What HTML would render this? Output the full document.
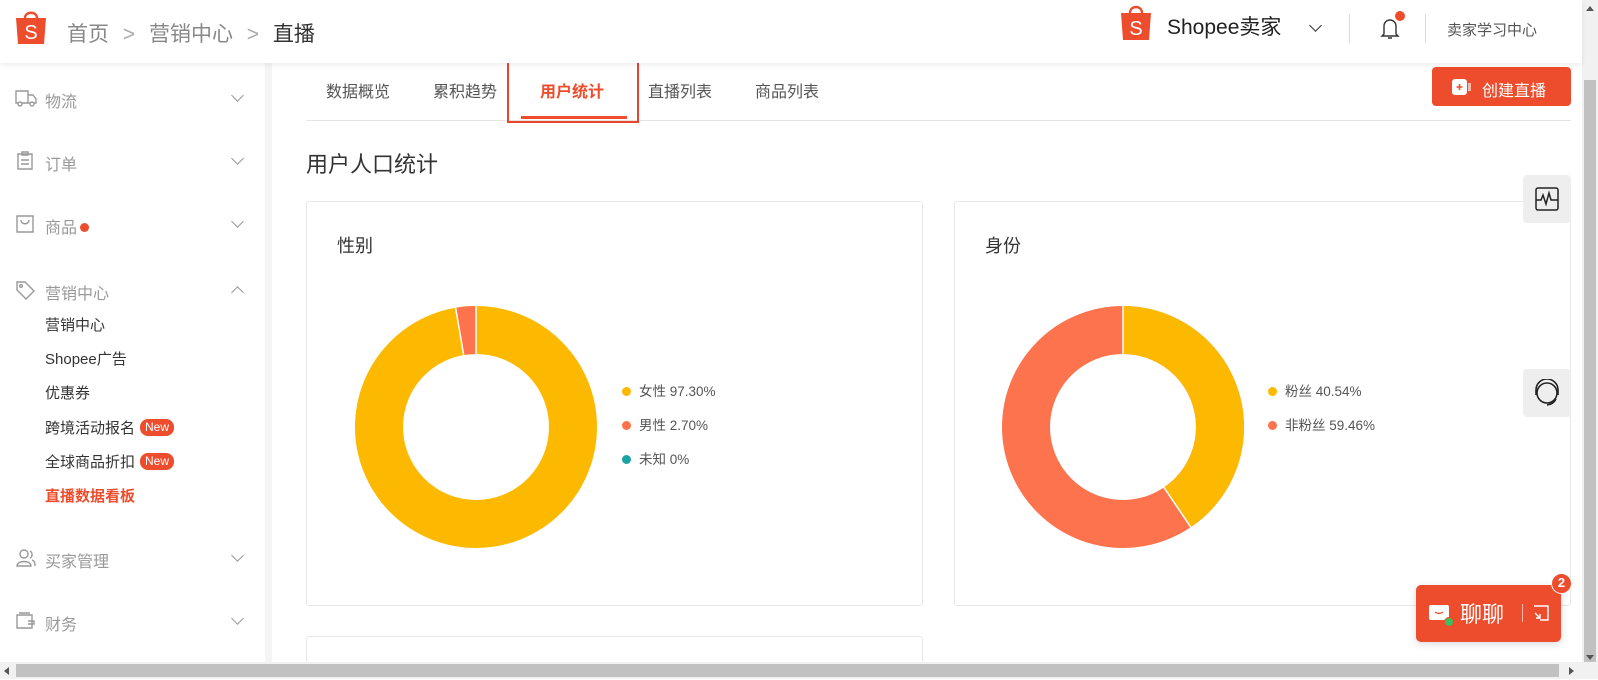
<!DOCTYPE html>
<html><head><meta charset="utf-8"><style>
*{margin:0;padding:0;box-sizing:border-box}
body{width:1598px;height:680px;overflow:hidden;background:#fff;font-family:"Liberation Sans","Noto Sans CJK SC",sans-serif;position:relative;color:#333}
.a{position:absolute;white-space:nowrap}
.hdr{left:0;top:0;width:1582px;height:63px;background:#fff;box-shadow:0 2px 6px rgba(0,0,0,.08);z-index:5}
.side{left:0;top:63px;width:265px;height:599px;background:#fff}
.gap{left:265px;top:63px;width:7px;height:599px;background:#f5f5f5}
.mi{font-size:16px;color:#999}
.sub{font-size:15px;color:#333;left:45px}
.chev{width:9px;height:9px;border-right:1.6px solid #999;border-bottom:1.6px solid #999;transform:rotate(45deg)}
.new{display:inline-block;background:#ee4d2d;color:#fff;font-size:12px;border-radius:8px;padding:0 5px;height:17px;line-height:17px;margin-left:5px;vertical-align:2px}
.tab{font-size:16px;color:#555;top:78px}
.card{border:1px solid #e8e8e8;border-radius:3px;background:#fff}
.leg{font-size:13.5px;color:#555}
.dot{display:inline-block;width:9px;height:9px;border-radius:50%;margin-right:8px;vertical-align:0}
.fl{width:48px;height:48px;background:#eee;border-radius:4px}
</style></head><body>
<div class="a hdr">
  <svg class="a" style="left:15px;top:9px" width="32" height="36" viewBox="0 0 32 36"><path d="M10 9 C10 2 22 2 22 9" fill="none" stroke="#ee4d2d" stroke-width="2.4"/><path d="M1 9 H31 L29 35 H3 Z" fill="#ee4d2d"/><text x="16" y="30" font-size="20" fill="#fff" text-anchor="middle" font-family="Liberation Sans">S</text></svg>
  <div class="a" style="left:67px;top:18px;font-size:21px;color:#888">首页 <span style="margin:0 8px;color:#aaa">&gt;</span> 营销中心 <span style="margin:0 8px;color:#aaa">&gt;</span> <span style="color:#333">直播</span></div>
  <svg class="a" style="left:1120px;top:3px" width="32" height="38" viewBox="0 0 32 38"><path d="M10 10 C10 2 22 2 22 10" fill="none" stroke="#ee4d2d" stroke-width="2.4"/><path d="M1 10 H31 L29 37 H3 Z" fill="#ee4d2d"/><text x="16" y="32" font-size="20" fill="#fff" text-anchor="middle" font-family="Liberation Sans">S</text></svg>
  <div class="a" style="left:1167px;top:11px;font-size:21px;color:#222">Shopee卖家</div>
  <div class="a chev" style="left:1311px;top:21px;border-color:#333"></div>
  <div class="a" style="left:1349px;top:14px;width:1px;height:29px;background:#ddd"></div>
  <svg class="a" style="left:1380px;top:15px" width="20" height="26" viewBox="0 0 20 26"><path d="M4 19 V11 A6 6 0 0 1 16 11 V19 L18 21 H2 Z M8 23 H12" fill="none" stroke="#333" stroke-width="1.4"/></svg>
  <div class="a" style="left:1395px;top:11px;width:10px;height:10px;border-radius:50%;background:#ee4d2d"></div>
  <div class="a" style="left:1425px;top:14px;width:1px;height:29px;background:#ddd"></div>
  <div class="a" style="left:1447px;top:19px;font-size:15px;color:#555">卖家学习中心</div>
</div>
<div class="a side"></div><div class="a gap"></div>
<svg class="a" style="left:15px;top:89px" width="22" height="18" viewBox="0 0 22 18" fill="none" stroke="#999" stroke-width="1.4"><path d="M1 2 H13 V14 H1 Z M13 6 H18 L21 10 V14 H13"/><circle cx="5" cy="15" r="2" fill="#fff"/><circle cx="17" cy="15" r="2" fill="#fff"/></svg>
<div class="a mi" style="left:45px;top:88px">物流</div><div class="a chev" style="left:233px;top:91px"></div>
<svg class="a" style="left:17px;top:151px" width="16" height="19" viewBox="0 0 16 19" fill="none" stroke="#999" stroke-width="1.4"><path d="M1 3 H15 V18 H1 Z M5 1 H11 V4 H5 Z M4 9 H12 M4 13 H12"/></svg>
<div class="a mi" style="left:45px;top:151px">订单</div><div class="a chev" style="left:233px;top:154px"></div>
<svg class="a" style="left:16px;top:215px" width="18" height="18" viewBox="0 0 18 18" fill="none" stroke="#999" stroke-width="1.4"><path d="M1 1 H17 V17 H1 Z M5 5 C5 10 13 10 13 5"/></svg>
<div class="a mi" style="left:45px;top:214px">商品<span style="display:inline-block;width:9px;height:9px;border-radius:50%;background:#ee4d2d;margin-left:3px;vertical-align:1px"></span></div><div class="a chev" style="left:233px;top:217px"></div>
<svg class="a" style="left:16px;top:281px" width="19" height="19" viewBox="0 0 19 19" fill="none" stroke="#999" stroke-width="1.4"><path d="M1 1 H9 L18 10 L10 18 L1 9 Z"/><circle cx="5" cy="5" r="1.3"/></svg>
<div class="a mi" style="left:45px;top:280px">营销中心</div><div class="a chev" style="left:233px;top:288px;transform:rotate(225deg)"></div>
<div class="a sub" style="top:314px">营销中心</div>
<div class="a sub" style="top:348px">Shopee广告</div>
<div class="a sub" style="top:382px">优惠券</div>
<div class="a sub" style="top:417px">跨境活动报名<span class="new">New</span></div>
<div class="a sub" style="top:451px">全球商品折扣<span class="new">New</span></div>
<div class="a sub" style="top:485px;color:#ee4d2d;font-weight:bold">直播数据看板</div>
<svg class="a" style="left:16px;top:549px" width="20" height="18" viewBox="0 0 20 18" fill="none" stroke="#999" stroke-width="1.4"><circle cx="8" cy="5" r="4"/><path d="M1 17 C1 11 15 11 15 17 Z M14 2 A4 4 0 0 1 14 9 M16 11 C19 12 19 15 19 17"/></svg>
<div class="a mi" style="left:45px;top:548px">买家管理</div><div class="a chev" style="left:233px;top:551px"></div>
<svg class="a" style="left:16px;top:612px" width="19" height="17" viewBox="0 0 19 17" fill="none" stroke="#999" stroke-width="1.4"><path d="M1 3 H16 V16 H1 Z M3 1 H14 M12 9 H18 V12 H12"/></svg>
<div class="a mi" style="left:45px;top:611px">财务</div><div class="a chev" style="left:233px;top:614px"></div>

<div class="a tab" style="left:326px">数据概览</div>
<div class="a tab" style="left:433px">累积趋势</div>
<div class="a tab" style="left:540px;color:#ee4d2d;font-weight:bold">用户统计</div>
<div class="a tab" style="left:648px">直播列表</div>
<div class="a tab" style="left:755px">商品列表</div>
<div class="a" style="left:306px;top:120px;width:1265px;height:1px;background:#e5e5e5"></div>
<div class="a" style="left:521px;top:116px;width:106px;height:3px;background:#ee4d2d"></div>
<div class="a" style="left:507px;top:61px;width:132px;height:62px;border:2px solid #e8452c"></div>
<div class="a" style="left:1432px;top:67px;width:139px;height:39px;background:#ee4d2d;border-radius:4px"></div>
<svg class="a" style="left:1452px;top:79px" width="20" height="16" viewBox="0 0 20 16"><rect x="0" y="0" width="15" height="16" rx="3" fill="#fff"/><rect x="16" y="4" width="3" height="8" fill="#fff" opacity=".6"/><path d="M7.5 5 V11 M4.5 8 H10.5" stroke="#ee4d2d" stroke-width="1.6"/></svg>
<div class="a" style="left:1482px;top:77px;font-size:16px;color:#fff">创建直播</div>

<div class="a" style="left:306px;top:147px;font-size:22px;color:#333">用户人口统计</div>

<div class="a card" style="left:306px;top:201px;width:617px;height:405px"></div>
<div class="a card" style="left:954px;top:201px;width:617px;height:405px"></div>
<div class="a card" style="left:306px;top:636px;width:617px;height:40px"></div>
<div class="a" style="left:337px;top:232px;font-size:18px;color:#333">性别</div>
<div class="a" style="left:985px;top:232px;font-size:18px;color:#333">身份</div>

<svg class="a" style="left:348px;top:299px" width="256" height="256" viewBox="-128 -128 256 256">
<circle r="97" fill="none" stroke="#fdb900" stroke-width="48"/>
<circle r="97" fill="none" stroke="#fd734d" stroke-width="48" stroke-dasharray="16.5 700" transform="rotate(-99.7)"/>
<path d="M0 -122 V-72" stroke="#fff" stroke-width="1.5"/>
<path d="M0 -122 V-72" stroke="#fff" stroke-width="1.5" transform="rotate(-9.7)"/>
</svg>
<div class="a leg" style="left:622px;top:380px"><span class="dot" style="background:#fdb900"></span>女性 97.30%</div>
<div class="a leg" style="left:622px;top:414px"><span class="dot" style="background:#fd734d"></span>男性 2.70%</div>
<div class="a leg" style="left:622px;top:448px"><span class="dot" style="background:#1aa3a3"></span>未知 0%</div>

<svg class="a" style="left:995px;top:299px" width="256" height="256" viewBox="-128 -128 256 256">
<circle r="97" fill="none" stroke="#fd734d" stroke-width="48"/>
<circle r="97" fill="none" stroke="#fdb900" stroke-width="48" stroke-dasharray="247 700" transform="rotate(-90)"/>
<path d="M0 -122 V-72" stroke="#fff" stroke-width="1.5"/>
<path d="M0 -122 V-72" stroke="#fff" stroke-width="1.5" transform="rotate(145.9)"/>
</svg>
<div class="a leg" style="left:1268px;top:380px"><span class="dot" style="background:#fdb900"></span>粉丝 40.54%</div>
<div class="a leg" style="left:1268px;top:414px"><span class="dot" style="background:#fd734d"></span>非粉丝 59.46%</div>

<div class="a fl" style="left:1523px;top:175px"></div>
<svg class="a" style="left:1535px;top:187px" width="24" height="24" viewBox="0 0 24 24" fill="none" stroke="#222" stroke-width="1.5"><rect x="1" y="1" width="22" height="22" rx="2"/><path d="M1 13 H6 L8 8 L11 17 L14 6 L16 13 H23"/></svg>
<div class="a fl" style="left:1523px;top:369px"></div>
<svg class="a" style="left:1533px;top:379px" width="28" height="28" viewBox="0 0 28 28" fill="none" stroke="#222" stroke-width="1.6"><circle cx="14" cy="14" r="10"/><path d="M3 16 V11 A11 11 0 0 1 25 11 V16 M14 26 A11 11 0 0 0 23 20"/></svg>

<div class="a" style="left:1416px;top:585px;width:145px;height:57px;background:#ee4d2d;border-radius:5px;box-shadow:0 2px 8px rgba(0,0,0,.15)"></div>
<svg class="a" style="left:1428px;top:603px" width="26" height="24" viewBox="0 0 26 24"><rect x="1" y="2" width="20" height="15" rx="2" fill="#fff"/><path d="M7 9 Q11 12 15 9" stroke="#ee4d2d" stroke-width="1.4" fill="none"/><circle cx="21" cy="19" r="4.5" fill="#3cbf5c" stroke="#ee4d2d" stroke-width="1"/></svg>
<div class="a" style="left:1460px;top:597px;font-size:22px;color:#fff">聊聊</div>
<div class="a" style="left:1522px;top:604px;width:1px;height:18px;background:rgba(255,255,255,.6)"></div>
<svg class="a" style="left:1533px;top:605px" width="16" height="16" viewBox="0 0 16 16" fill="none" stroke="#fff" stroke-width="1.4"><path d="M1 1 H15 V15 H7 M2 8 L7 13 M3 13 H7 V9"/></svg>
<div class="a" style="left:1551px;top:573px;width:21px;height:21px;border-radius:50%;background:#ee4d2d;border:1.5px solid #fff;color:#fff;font-size:13px;text-align:center;line-height:18px;font-weight:bold">2</div>

<div class="a" style="left:1582px;top:0;width:16px;height:662px;background:#f1f1f1"></div>
<div class="a" style="left:1584px;top:80px;width:12px;height:582px;background:#c1c1c1"></div>
<div class="a" style="left:1586px;top:6px;width:0;height:0;border-left:4px solid transparent;border-right:4px solid transparent;border-bottom:5px solid #555"></div>
<div class="a" style="left:1586px;top:655px;width:0;height:0;border-left:4px solid transparent;border-right:4px solid transparent;border-top:5px solid #555"></div>
<div class="a" style="left:0;top:662px;width:1598px;height:18px;background:#fff"></div>
<div class="a" style="left:0;top:662px;width:1598px;height:17px;background:#f1f1f1"></div>
<div class="a" style="left:16px;top:664px;width:1543px;height:13px;background:#c1c1c1"></div>
<div class="a" style="left:4px;top:667px;width:0;height:0;border-top:4px solid transparent;border-bottom:4px solid transparent;border-right:5px solid #555"></div>
<div class="a" style="left:1569px;top:667px;width:0;height:0;border-top:4px solid transparent;border-bottom:4px solid transparent;border-left:5px solid #555"></div>
</body></html>
